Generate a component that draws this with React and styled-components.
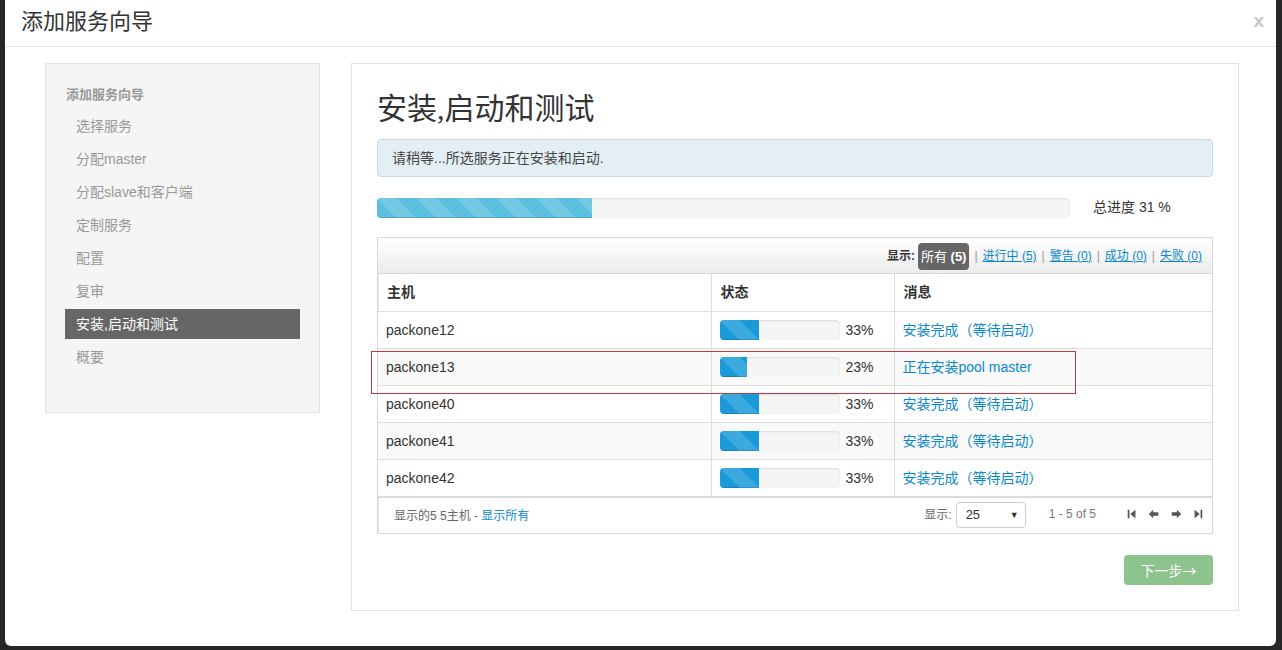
import styled, { createGlobalStyle } from "styled-components";

const GlobalStyle = createGlobalStyle`
    html, body {
        margin: 0;
        padding: 0;
        background: #262626;
    }
    body {
        font-family: "Liberation Sans", "Noto Sans CJK SC", Arial, sans-serif;
        font-size: 14px;
        line-height: 20px;
        color: #333;
    }
`;

const Page = styled.div`
    position: relative;
    width: 1282px;
    height: 650px;
    overflow: hidden;
`;

const Modal = styled.div`
    margin-left: 5px;
    width: 1271px;
    height: 646px;
    background: #fff;
    border-radius: 0 0 6px 6px;
    display: flex;
    flex-direction: column;
`;

const Header = styled.div`
    height: 47px;
    box-sizing: border-box;
    border-bottom: 1px solid #e5e5e5;
    display: flex;
    align-items: center;
    justify-content: space-between;
    padding: 0 12px 2px 16px;
`;

const ModalTitle = styled.h3`
    margin: 0;
    font-family: "Liberation Serif", "Noto Sans CJK SC", serif;
    font-size: 22px;
    font-weight: normal;
    color: #333;
`;

const Close = styled.span`
    font-family: "Liberation Sans", sans-serif;
    font-size: 19px;
    font-weight: bold;
    color: #c8c8c8;
    margin-top: -2px;
`;

const Body = styled.div`
    display: grid;
    grid-template-columns: 275px 1fr;
    column-gap: 31px;
    align-items: start;
    padding: 16px 37px 0 40px;
`;

const Sidebar = styled.div`
    background: #f5f5f5;
    border: 1px solid #e3e3e3;
    padding: 21px 19px 37px;
`;

const SideHeading = styled.div`
    font-size: 13px;
    font-weight: bold;
    color: #999;
    line-height: 20px;
    padding-left: 1px;
    margin-bottom: 6px;
`;

const SideItem = styled.div`
    height: 30px;
    line-height: 30px;
    padding-left: 11px;
    margin-bottom: 3px;
    font-size: 14px;
    color: ${({ $active }) => ($active ? "#fff" : "#999")};
    background: ${({ $active }) => ($active ? "#666" : "transparent")};
`;

const Panel = styled.div`
    border: 1px solid #e1e1e1;
    padding: 25px 25px 25px;
`;

const Title = styled.h2`
    margin: 0 0 10px;
    font-family: "Liberation Serif", "Noto Sans CJK SC", serif;
    font-size: 30px;
    font-weight: normal;
    line-height: 40px;
    color: #333;
`;

const Alert = styled.div`
    background: #e4eff5;
    border: 1px solid #cdd9e1;
    border-radius: 4px;
    padding: 8px 14px;
    line-height: 20px;
    font-size: 14px;
    color: #444;
`;

const ProgressRow = styled.div`
    display: flex;
    align-items: center;
    height: 20px;
    margin-top: 21px;
`;

const Track = styled.div`
    flex: ${({ $width }) => ($width ? "none" : "1")};
    width: ${({ $width }) => ($width ? `${$width}px` : "auto")};
    height: 20px;
    background: #f5f5f5;
    border-radius: 4px;
    box-shadow: inset 0 1px 2px rgba(0, 0, 0, 0.1);
    overflow: hidden;
`;

const Fill = styled.div`
    height: 100%;
    background-color: ${({ $tone }) => ($tone === "info" ? "#5bc0de" : "#1a9ad9")};
    background-image: linear-gradient(
        45deg,
        rgba(255, 255, 255, 0.15) 25%,
        transparent 25%,
        transparent 50%,
        rgba(255, 255, 255, 0.15) 50%,
        rgba(255, 255, 255, 0.15) 75%,
        transparent 75%,
        transparent
    );
    background-size: 40px 40px;
    box-shadow: inset 0 -1px 0 rgba(0, 0, 0, 0.15);
`;

const TotalLabel = styled.span`
    width: 120px;
    margin-left: 23px;
    font-size: 14px;
    line-height: 20px;
    margin-top: -2px;
    color: #333;
`;

const TableBox = styled.div`
    margin-top: 19px;
    border: 1px solid #d8d8d8;
    box-shadow: inset 1px 0 0 #e4e4e4;
`;

const Toolbar = styled.div`
    height: 36px;
    box-sizing: border-box;
    background: linear-gradient(#fff, #ececec);
    border-bottom: 1px solid #d8d8d8;
    display: flex;
    align-items: center;
    justify-content: flex-end;
    padding: 0 10px 0 0;
    font-size: 12px;
    color: #777;
`;

const ShowLabel = styled.b`
    color: #333;
    margin-right: 3px;
`;

const Pill = styled.span`
    background: #666;
    color: #fff;
    font-size: 13px;
    border-radius: 4px;
    padding: 0 3px;
    height: 27px;
    line-height: 27px;
    margin-top: 1px;
`;

const FilterLink = styled.a`
    color: #0a88cc;
    text-decoration: underline;
    cursor: pointer;
`;

const Sep = styled.span`
    color: #999;
    margin: 0 5px;
`;

const Table = styled.table`
    width: 100%;
    border-collapse: collapse;
    font-size: 14px;
    line-height: 20px;
`;

const Th = styled.th`
    text-align: left;
    font-weight: bold;
    height: 37px;
    box-sizing: border-box;
    padding: 0 9px;
    border-bottom: 1px solid #ddd;
    border-left: ${({ $first }) => ($first ? "none" : "1px solid #ddd")};
`;

const Tr = styled.tr`
    background: ${({ $odd }) => ($odd ? "#f9f9f9" : "#fff")};
`;

const Td = styled.td`
    height: 37px;
    box-sizing: border-box;
    padding: 0 8px;
    border-bottom: 1px solid #ddd;
    border-left: ${({ $first }) => ($first ? "none" : "1px solid #ddd")};
    color: #333;
`;

const StatusCell = styled.div`
    display: flex;
    align-items: center;
    gap: 6px;
`;

const MsgLink = styled.a`
    color: #0a88cc;
    text-decoration: none;
`;

const Footer = styled.div`
    height: 36px;
    box-sizing: border-box;
    border-top: 1px solid #d8d8d8;
    display: flex;
    align-items: center;
    padding: 0 8px 0 16px;
    font-size: 12px;
    color: #666;
`;

const FooterInfo = styled.div`
    flex: 1;
    margin-top: 2px;
`;

const Pager = styled.div`
    display: flex;
    align-items: center;
`;

const Select = styled.div`
    width: 70px;
    height: 26px;
    box-sizing: border-box;
    border: 1px solid #ccc;
    border-radius: 4px;
    margin-left: 4px;
    display: flex;
    align-items: center;
    justify-content: space-between;
    padding: 0 6px 0 9px;
    font-size: 13px;
    color: #333;
`;

const Caret = styled.span`
    font-size: 9px;
    color: #333;
`;

const Range = styled.span`
    color: #777;
    margin-left: 23px;
    margin-right: 30px;
    margin-top: -3px;
`;

const NavIcons = styled.div`
    display: flex;
    align-items: center;
    gap: 10px;
    margin-top: -2px;
`;

const Actions = styled.div`
    display: flex;
    justify-content: flex-end;
    margin-top: 21px;
`;

const NextButton = styled.button`
    width: 89px;
    height: 30px;
    border: none;
    border-radius: 4px;
    background: #8dc48d;
    color: #fff;
    font-family: inherit;
    font-size: 14px;
    padding: 0;
`;

const Arrow = styled.span`
    font-family: "Noto Sans CJK SC", sans-serif;
    font-size: 14px;
`;

const Annotation = styled.div`
    position: absolute;
    left: 371px;
    top: 351px;
    width: 703px;
    height: 41px;
    border: 1px solid #c9383b;
    pointer-events: none;
`;

const NavIcon = ({ kind }) => {
    const paths = {
        first: "M2 2h2v10H2z M5 7l6-5v10z",
        prev: "M1 7l5-5v3h6v4H6v3z",
        next: "M13 7l-5-5v3H2v4h6v3z",
        last: "M10 2h2v10h-2z M9 7L3 2v10z",
    };
    return (
        <svg width="12" height="14" viewBox="0 0 14 14">
            <path d={paths[kind]} fill="#555" />
        </svg>
    );
};

const steps = [
    "选择服务",
    "分配master",
    "分配slave和客户端",
    "定制服务",
    "配置",
    "复审",
    "安装,启动和测试",
    "概要",
];

const hosts = [
    { name: "packone12", pct: 33, msg: "安装完成（等待启动）" },
    { name: "packone13", pct: 23, msg: "正在安装pool master" },
    { name: "packone40", pct: 33, msg: "安装完成（等待启动）" },
    { name: "packone41", pct: 33, msg: "安装完成（等待启动）" },
    { name: "packone42", pct: 33, msg: "安装完成（等待启动）" },
];

export default function App() {
    return (
        <Page>
            <GlobalStyle />
            <Modal>
                <Header>
                    <ModalTitle>添加服务向导</ModalTitle>
                    <Close>x</Close>
                </Header>
                <Body>
                    <Sidebar>
                        <SideHeading>添加服务向导</SideHeading>
                        {steps.map((s) => (
                            <SideItem key={s} $active={s === "安装,启动和测试"}>
                                {s}
                            </SideItem>
                        ))}
                    </Sidebar>
                    <Panel>
                        <Title>安装,启动和测试</Title>
                        <Alert>请稍等...所选服务正在安装和启动.</Alert>
                        <ProgressRow>
                            <Track>
                                <Fill $tone="info" style={{ width: "31%" }} />
                            </Track>
                            <TotalLabel>总进度 31 %</TotalLabel>
                        </ProgressRow>
                        <TableBox>
                            <Toolbar>
                                <ShowLabel>显示:</ShowLabel>
                                <Pill>
                                    所有 <b>(5)</b>
                                </Pill>
                                <Sep>|</Sep>
                                <FilterLink>进行中 (5)</FilterLink>
                                <Sep>|</Sep>
                                <FilterLink>警告 (0)</FilterLink>
                                <Sep>|</Sep>
                                <FilterLink>成功 (0)</FilterLink>
                                <Sep>|</Sep>
                                <FilterLink>失败 (0)</FilterLink>
                            </Toolbar>
                            <Table>
                                <colgroup>
                                    <col style={{ width: "333px" }} />
                                    <col style={{ width: "183px" }} />
                                    <col />
                                </colgroup>
                                <thead>
                                    <tr>
                                        <Th $first>主机</Th>
                                        <Th>状态</Th>
                                        <Th>消息</Th>
                                    </tr>
                                </thead>
                                <tbody>
                                    {hosts.map((h, i) => (
                                        <Tr key={h.name} $odd={i % 2 === 1}>
                                            <Td $first>{h.name}</Td>
                                            <Td>
                                                <StatusCell>
                                                    <Track $width={120}>
                                                        <Fill style={{ width: `${h.pct}%` }} />
                                                    </Track>
                                                    {h.pct}%
                                                </StatusCell>
                                            </Td>
                                            <Td>
                                                <MsgLink>{h.msg}</MsgLink>
                                            </Td>
                                        </Tr>
                                    ))}
                                </tbody>
                            </Table>
                            <Footer>
                                <FooterInfo>
                                    显示的5 5主机 - <MsgLink>显示所有</MsgLink>
                                </FooterInfo>
                                <Pager>
                                    显示:
                                    <Select>
                                        25 <Caret>▼</Caret>
                                    </Select>
                                    <Range>1 - 5 of 5</Range>
                                    <NavIcons>
                                        <NavIcon kind="first" />
                                        <NavIcon kind="prev" />
                                        <NavIcon kind="next" />
                                        <NavIcon kind="last" />
                                    </NavIcons>
                                </Pager>
                            </Footer>
                        </TableBox>
                        <Actions>
                            <NextButton>
                                下一步<Arrow>→</Arrow>
                            </NextButton>
                        </Actions>
                    </Panel>
                </Body>
            </Modal>
            <Annotation />
        </Page>
    );
}
